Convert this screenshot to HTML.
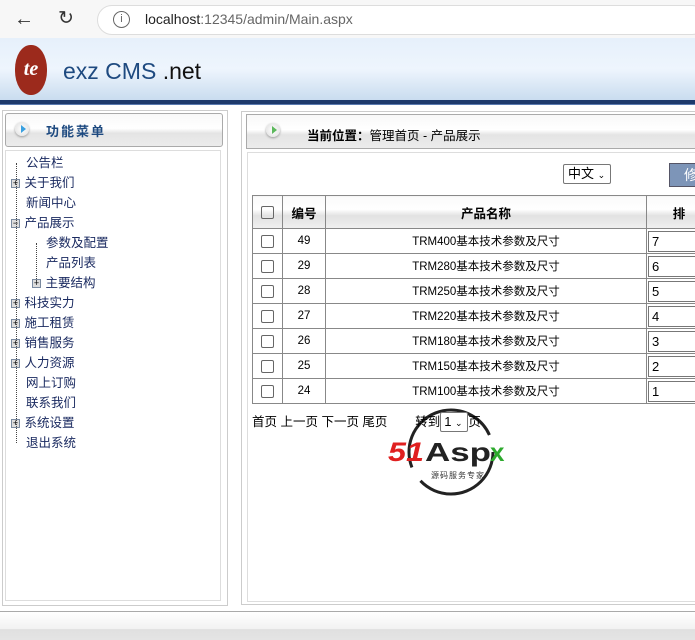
<!DOCTYPE html>
<html><head><meta charset="utf-8"><style>
*{margin:0;padding:0;box-sizing:border-box}
body{width:695px;height:640px;overflow:hidden;background:#fff;font-family:"Liberation Sans","Noto Sans CJK SC",sans-serif;font-size:12px;color:#000;position:relative}
.abs{position:absolute}
.chrome{left:0;top:0;width:695px;height:38px;background:#f7f7f7}
.url{left:97px;top:5px;width:610px;height:30px;border:1px solid #ddd;border-radius:15px;background:#fff}
.hdr{left:0;top:38px;width:695px;height:62px;background:linear-gradient(#e6f0fb,#eef5fd 50%,#c9dcef)}
.stripe{left:0;top:100px;width:695px;height:5px;background:#1e3a6c;border-bottom:1px solid #5a7ab0}
.panel{border:1px solid #ccc;background:#fff}
.bar{background:linear-gradient(#f8f8f8,#fff 45%,#e4e4e4 60%,#ececec);border:1px solid #aaa;border-radius:3px}
.tree div{height:20px;line-height:20px;color:#1a2a60;font-size:12.5px;position:relative}
.pm{display:inline-block;width:9px;height:9px;border:1px solid #7a8aa0;background:#ddd;font-size:9px;line-height:7px;text-align:center;color:#000;vertical-align:middle;margin-right:1px}
table{border-collapse:collapse;position:absolute;left:252px;top:195px;width:460px}
td,th{border:1px solid #888;height:25px;text-align:center;font-size:11.5px;padding:0}
th{height:33px;background:linear-gradient(#fafafa,#fff 40%,#e2e2e2 60%,#f0f0f0);font-weight:bold;font-size:12.5px}
.cb{display:inline-block;width:13px;height:13px;border:1px solid #666;border-radius:2px;vertical-align:middle}
.inp{display:block;margin:0 0 0 1px;height:21px;border:1px solid #777;text-align:left;padding-left:3px;line-height:20px;font-size:13px}
</style></head><body>
<div class="abs chrome"></div>
<div class="abs" style="left:14px;top:8px;font-size:20px;color:#333">&#8592;</div>
<div class="abs" style="left:58px;top:7px;font-size:19px;color:#333">&#8635;</div>
<div class="abs url"></div>
<div class="abs" style="left:113px;top:11px;width:17px;height:17px;border:1.5px solid #666;border-radius:50%;font-size:11px;text-align:center;line-height:14px;color:#666">i</div>
<div class="abs" style="left:145px;top:11px;font-size:14px;color:#222">localhost<span style="color:#666">:12345/admin/Main.aspx</span></div>
<div class="abs hdr"></div>
<div class="abs" style="left:15px;top:45px;width:32px;height:50px;border-radius:48%;background:#9c2a1c;color:#fff;font:italic bold 20px 'Liberation Serif',serif;text-align:center;line-height:48px">te</div>
<div class="abs" style="left:63px;top:58px;font-size:23px;color:#1e4a80">exz CMS <span style="color:#111">.net</span></div>
<div class="abs stripe"></div>
<!-- left -->
<div class="abs panel" style="left:2px;top:110px;width:226px;height:496px"></div>
<div class="abs bar" style="left:5px;top:113px;width:218px;height:34px"></div>
<div class="abs" style="left:15px;top:122px;width:14px;height:14px;border-radius:50%;background:radial-gradient(#fff,#ddd);box-shadow:0 1px 2px #999"></div>
<div class="abs" style="left:21px;top:125px;border-left:5px solid #3aa0e0;border-top:4px solid transparent;border-bottom:4px solid transparent"></div>
<div class="abs" style="left:46px;top:121px;font-weight:bold;font-size:13px;color:#1e4a80;letter-spacing:2px">功能菜单</div>
<div class="abs" style="left:5px;top:150px;width:216px;height:451px;border:1px solid #ddd"></div>
<div class="abs tree" style="left:11px;top:153px">
<div style="padding-left:15px">公告栏</div>
<div><span class="pm">+</span> 关于我们</div>
<div style="padding-left:15px">新闻中心</div>
<div><span class="pm">−</span> 产品展示</div>
<div style="padding-left:35px">参数及配置</div>
<div style="padding-left:35px">产品列表</div>
<div style="padding-left:21px"><span class="pm">+</span> 主要结构</div>
<div><span class="pm">+</span> 科技实力</div>
<div><span class="pm">+</span> 施工租赁</div>
<div><span class="pm">+</span> 销售服务</div>
<div><span class="pm">+</span> 人力资源</div>
<div style="padding-left:15px">网上订购</div>
<div style="padding-left:15px">联系我们</div>
<div><span class="pm">+</span> 系统设置</div>
<div style="padding-left:15px">退出系统</div>
</div>
<div class="abs" style="left:16px;top:163px;height:280px;border-left:1px dotted #444"></div>
<div class="abs" style="left:36px;top:243px;height:38px;border-left:1px dotted #444"></div>
<!-- right -->
<div class="abs panel" style="left:241px;top:111px;width:460px;height:494px;border-color:#ccc"></div>
<div class="abs bar" style="left:246px;top:114px;width:460px;height:35px;border-radius:0"></div>
<div class="abs" style="left:266px;top:123px;width:14px;height:14px;border-radius:50%;background:radial-gradient(#fff,#ddd);box-shadow:0 1px 2px #999"></div>
<div class="abs" style="left:272px;top:126px;border-left:5px solid #5cb85c;border-top:4px solid transparent;border-bottom:4px solid transparent"></div>
<div class="abs" style="left:307px;top:125px;font-size:12.5px"><b>当前位置：</b>管理首页 - 产品展示</div>
<div class="abs" style="left:247px;top:152px;width:450px;height:450px;border:1px solid #ddd"></div>
<div class="abs" style="left:563px;top:164px;width:48px;height:20px;border:1px solid #777;border-radius:2px;font-size:13px;line-height:18px;padding-left:4px">中文 <span style="font-size:9px">&#8964;</span></div>
<div class="abs" style="left:669px;top:163px;width:40px;height:24px;background:#7d95b8;border:1px solid #556;color:#fff;font-size:14px;line-height:22px;padding-left:14px">修</div>
<table>
<tr><th style="width:30px"><span class="cb"></span></th><th style="width:43px">编号</th><th style="width:321px">产品名称</th><th>排</th></tr>
<tr><td><span class="cb"></span></td><td>49</td><td>TRM400基本技术参数及尺寸</td><td><span class="inp">7</span></td></tr>
<tr><td><span class="cb"></span></td><td>29</td><td>TRM280基本技术参数及尺寸</td><td><span class="inp">6</span></td></tr>
<tr><td><span class="cb"></span></td><td>28</td><td>TRM250基本技术参数及尺寸</td><td><span class="inp">5</span></td></tr>
<tr><td><span class="cb"></span></td><td>27</td><td>TRM220基本技术参数及尺寸</td><td><span class="inp">4</span></td></tr>
<tr><td><span class="cb"></span></td><td>26</td><td>TRM180基本技术参数及尺寸</td><td><span class="inp">3</span></td></tr>
<tr><td><span class="cb"></span></td><td>25</td><td>TRM150基本技术参数及尺寸</td><td><span class="inp">2</span></td></tr>
<tr><td><span class="cb"></span></td><td>24</td><td>TRM100基本技术参数及尺寸</td><td><span class="inp">1</span></td></tr>
</table>
<svg class="abs" style="left:385px;top:404px" width="130" height="94" viewBox="0 0 130 94">
<circle cx="66" cy="48" r="42" fill="none" stroke="#222" stroke-width="3" stroke-dasharray="100 16 130 20"/>
<text x="3" y="57" font-family="Liberation Sans" font-style="italic" font-weight="bold" font-size="27" fill="#e02020" textLength="36" lengthAdjust="spacingAndGlyphs">51</text>
<text x="40" y="57" font-family="Liberation Sans" font-weight="bold" font-size="26" fill="#222" textLength="66" lengthAdjust="spacingAndGlyphs">Asp</text>
<text x="105" y="57" font-family="Liberation Sans" font-weight="bold" font-size="26" fill="#2eaa2e">x</text>
<text x="46" y="74" font-family="Noto Sans CJK SC" font-size="8" fill="#333" letter-spacing="1">源码服务专家</text>
</svg>
<div class="abs" style="left:252px;top:411px;font-size:12.5px">首页 上一页 下一页 尾页 &nbsp; &nbsp; &nbsp; &nbsp;转到<span style="display:inline-block;width:28px;height:20px;border:1px solid #777;border-radius:2px;padding-left:3px;line-height:18px;font-size:13px;background:#fff">1 <span style="font-size:9px">&#8964;</span></span>页</div>
<div class="abs" style="left:0;top:611px;width:695px;height:1px;background:#aaa"></div>
<div class="abs" style="left:0;top:612px;width:695px;height:28px;background:linear-gradient(#fff,#f2f2f2 60%,#e0e0e0 62%,#e4e4e4)"></div>
</body></html>
